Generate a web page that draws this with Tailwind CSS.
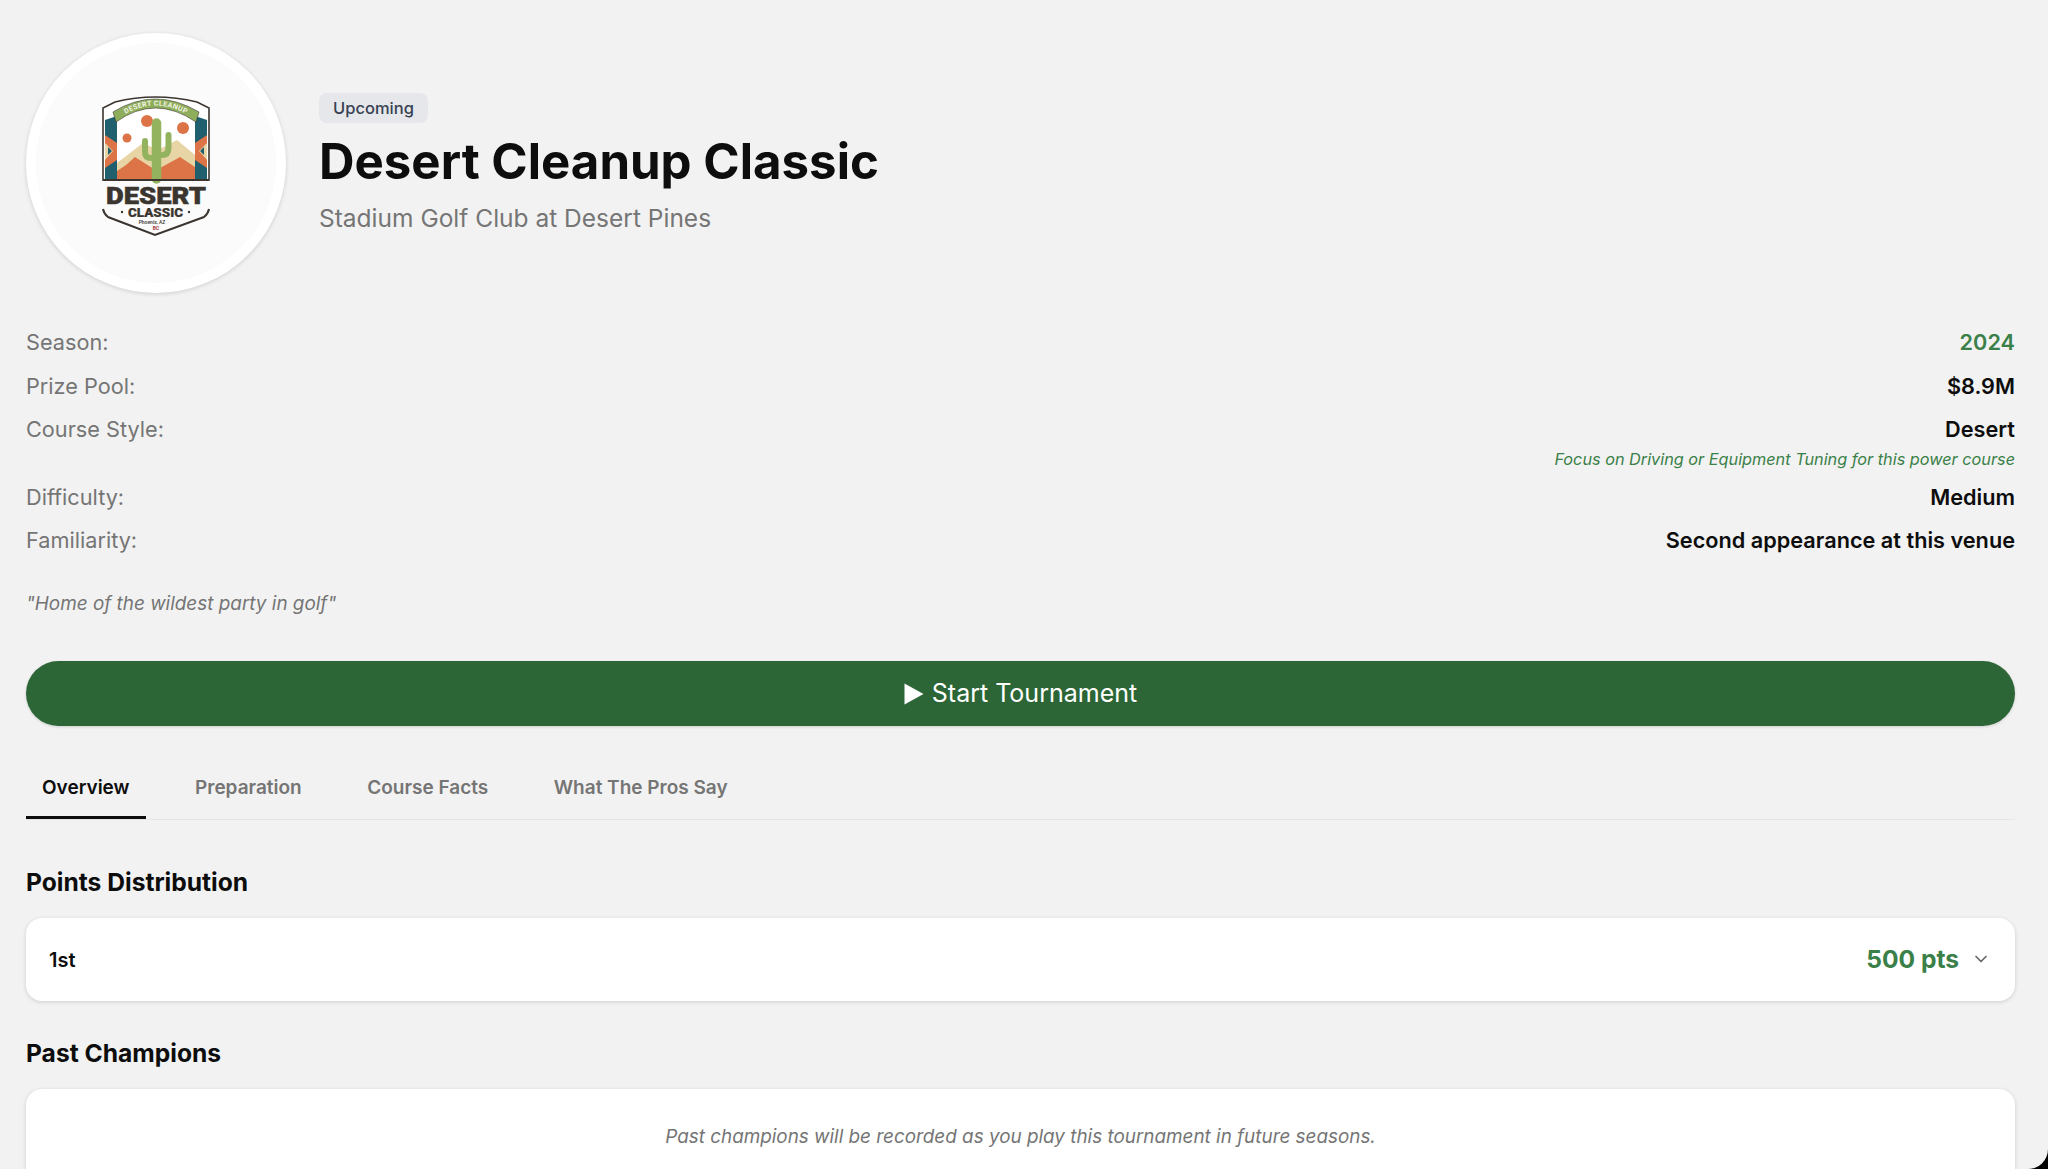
<!DOCTYPE html>
<html lang="en">
<head>
  <meta charset="UTF-8">
  <title>Desert Cleanup Classic</title>
  <script src="https://cdn.jsdelivr.net/npm/@tailwindcss/browser@4"></script>
</head>
<body class="bg-black">
  <div class="h-[1169px] overflow-hidden bg-[#f2f2f2] rounded-br-[20px] pl-[26px] pr-[33px] pt-[33px] font-['Inter',sans-serif] text-[#0d0d0d]">
    <!-- Header -->
    <div class="flex items-center gap-[33px]">
      <div class="w-[260px] h-[260px] shrink-0 rounded-full bg-[#fbfbfb] border-[10px] border-white shadow-[0_1px_4px_rgba(0,0,0,0.15)] flex items-center justify-center">
        <svg width="130" height="160" viewBox="91 83 130 160">
          <!-- shield -->
          <path d="M103 180V108L115 102Q155 92 197 102L209 108V180Z" fill="#fff" stroke="#3b3530" stroke-width="1.600"/>
          <path d="M105 180V120L117 116V180ZM207 180V120L195 116V180Z" fill="#1f5f6e"/>
          <path d="M105 135L117 143V160L105 168ZM207 135L195 143V160L207 168Z" fill="#dd7448"/>
          <path d="M105 143L113 151L105 160ZM207 143L199 151L207 160Z" fill="#e8d5a5"/>
          <path d="M108 147L112 151L108 155ZM204 147L200 151L204 155Z" fill="#1f5f6e"/>
          <!-- scene -->
          <circle cx="147" cy="121" r="6" fill="#dd7448"/>
          <circle cx="183" cy="128" r="6" fill="#dd7448"/>
          <circle cx="127" cy="138" r="4.500" fill="#dd7448"/>
          <path d="M117 163L143 143L158 150L177 140L195 155V179H117Z" fill="#e8d5a5"/>
          <path d="M117 179V171L126 165L135 157L157 171V179ZM160 179V168L180 157L195 167V179Z" fill="#dd7448"/>
          <path d="M145 141V152Q145 158 151 158H156M168.500 135V148Q168.500 155 162 155H156" fill="none" stroke="#93b35f" stroke-width="6" stroke-linecap="round"/>
          <path d="M156.500 179V123" stroke="#93b35f" stroke-width="9.500" stroke-linecap="round"/>
          <path d="M103 180H209" stroke="#3b3530" stroke-width="2"/>
          <!-- banner -->
          <path d="M113 112Q155 86 199 112L196 122Q155 94 116 122Z" fill="#8fae5c" stroke="#3b3530" stroke-width="0.600"/>
          <path id="banner-arc" d="M119 118Q155 93 193 118" fill="none"/>
          <text font-family="Roboto, sans-serif" font-size="7" font-weight="700" fill="#f3f5e6" letter-spacing="0.400"><textPath href="#banner-arc" startOffset="50%" text-anchor="middle">DESERT CLEANUP</textPath></text>
          <!-- wordmark -->
          <text x="156" y="204" text-anchor="middle" font-family="Roboto, sans-serif" font-size="24.500" font-weight="900" fill="#3b3530" stroke="#3b3530" stroke-width="0.500" textLength="100" lengthAdjust="spacingAndGlyphs">DESERT</text>
          <text x="155.500" y="216.500" text-anchor="middle" font-family="Roboto, sans-serif" font-size="12.500" font-weight="900" fill="#3b3530" stroke="#3b3530" stroke-width="0.200" textLength="55" lengthAdjust="spacingAndGlyphs">CLASSIC</text>
          <circle cx="122" cy="212" r="1.200" fill="#3b3530"/>
          <circle cx="189" cy="212" r="1.200" fill="#3b3530"/>
          <text x="152" y="224" text-anchor="middle" font-family="Roboto, sans-serif" font-size="5" font-weight="500" fill="#3b3530">Phoenix, AZ</text>
          <text x="156" y="230" text-anchor="middle" font-family="Roboto, sans-serif" font-size="5" font-weight="700" fill="#a33a3a">BC</text>
          <path d="M103 209Q104 214 108 217L155 235L204 217Q208 214 209 209" fill="none" stroke="#3b3530" stroke-width="2"/>
        </svg>
      </div>
      <div class="flex flex-col items-start">
        <span class="bg-[#e5e7eb] text-[#374151] text-[16.500px] leading-[20px] font-medium px-[14px] py-[5px] rounded-[8px]">Upcoming</span>
        <h1 class="text-[49.200px] leading-[57px] font-bold mt-[10px]">Desert Cleanup Classic</h1>
        <p class="text-[24.500px] leading-[32px] text-[#757575] mt-[12px]">Stadium Golf Club at Desert Pines</p>
      </div>
    </div>

    <!-- Details -->
    <div class="mt-[28px] text-[21.700px] leading-[43.500px]">
      <div class="flex justify-between"><span class="text-[#757575]">Season:</span><span class="font-semibold text-[#3a8048]">2024</span></div>
      <div class="flex justify-between"><span class="text-[#757575]">Prize Pool:</span><span class="font-semibold">$8.9M</span></div>
      <div class="flex justify-between">
        <span class="text-[#757575]">Course Style:</span>
        <div class="text-right">
          <div class="font-semibold">Desert</div>
          <div class="text-[16.250px] leading-[24px] italic text-[#3a8048] -mt-[5px] mb-[5px]">Focus on Driving or Equipment Tuning for this power course</div>
        </div>
      </div>
      <div class="flex justify-between"><span class="text-[#757575]">Difficulty:</span><span class="font-semibold">Medium</span></div>
      <div class="flex justify-between"><span class="text-[#757575]">Familiarity:</span><span class="font-semibold">Second appearance at this venue</span></div>
    </div>
    <p class="mt-[28px] text-[18.900px] leading-[26px] italic text-[#757575]">"Home of the wildest party in golf"</p>

    <button class="mt-[44px] w-full h-[65px] pt-[1px] rounded-full bg-[#2c6637] text-white text-[25px] flex items-center justify-center gap-[8px] shadow-[0_1px_3px_rgba(0,0,0,0.15)]">
      <svg width="20" height="22" viewBox="0 0 20 22"><path d="M0.500 0.500V21.500L19.500 11Z" fill="#fff"/></svg>
      Start Tournament
    </button>

    <!-- Tabs -->
    <div class="mt-[25px] flex border-b-[1px] border-[#e5e5e5] text-[19px] font-semibold text-[#757575] h-[69px]">
      <div class="h-[68px] px-[16px] pt-[10px] flex items-center text-[#0d0d0d] border-b-[3px] border-[#0d0d0d]">Overview</div>
      <div class="ml-[33.500px] px-[16px] pt-[10px] flex items-center h-[68px] pb-[3px]">Preparation</div>
      <div class="ml-[33.500px] px-[16px] pt-[10px] flex items-center h-[68px] pb-[3px]">Course Facts</div>
      <div class="ml-[33.500px] px-[16px] pt-[10px] flex items-center h-[68px] pb-[3px]">What The Pros Say</div>
    </div>

    <!-- Points -->
    <h2 class="mt-[45px] text-[24.600px] leading-[34px] font-bold">Points Distribution</h2>
    <div class="mt-[19px] h-[83px] bg-white rounded-[16px] shadow-[0_1px_4px_rgba(0,0,0,0.15)] pl-[23px] pr-[24px] flex items-center justify-between">
      <span class="text-[20px] font-semibold pt-[1px]">1st</span>
      <div class="flex items-center gap-[12px]">
        <span class="text-[24.600px] font-bold text-[#3a8048]">500 pts</span>
        <svg width="20" height="20" viewBox="0 0 24 24" fill="none" stroke="#666" stroke-width="2" stroke-linecap="round" stroke-linejoin="round"><path d="m6 9 6 6 6-6"/></svg>
      </div>
    </div>

    <!-- Past champions -->
    <h2 class="mt-[35px] text-[24.600px] leading-[34px] font-bold">Past Champions</h2>
    <div class="mt-[19px] h-[120px] bg-white rounded-[16px] shadow-[0_1px_4px_rgba(0,0,0,0.15)] pt-[33px] text-center text-[18.860px] leading-[30px] italic text-[#757575]">Past champions will be recorded as you play this tournament in future seasons.</div>
  </div>
</body>
</html>
